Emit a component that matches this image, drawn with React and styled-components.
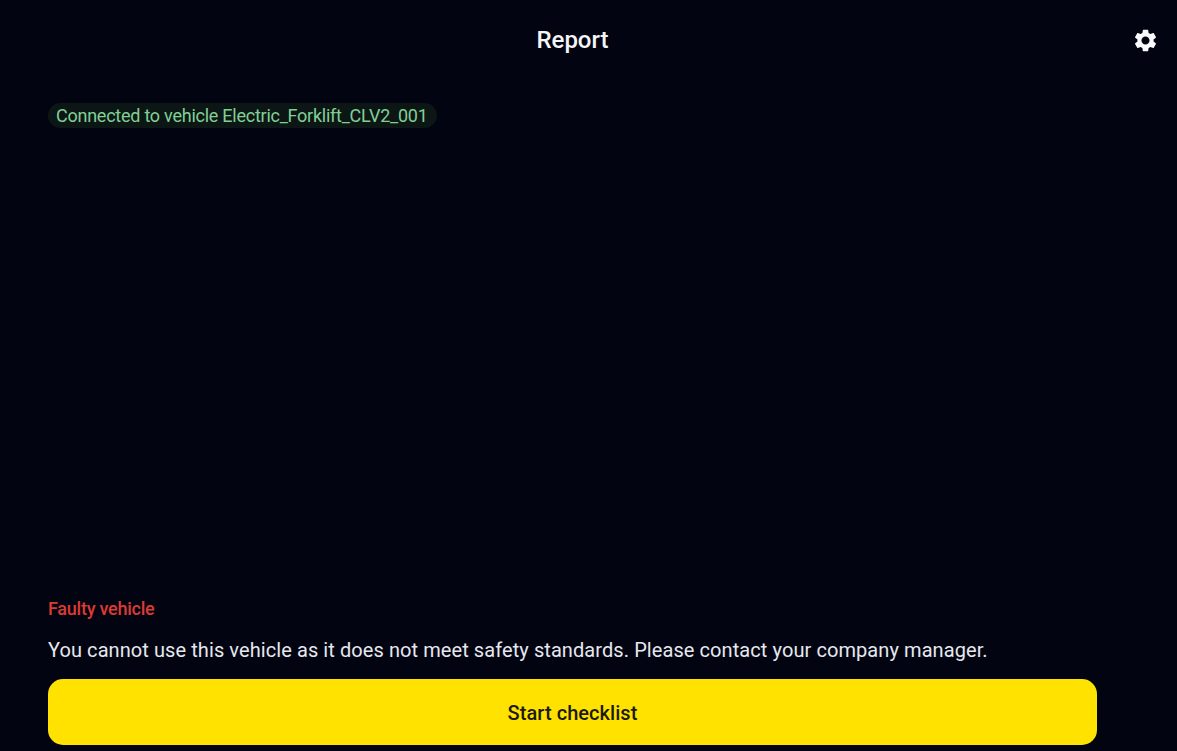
import styled, { createGlobalStyle } from 'styled-components';

const GlobalStyle = createGlobalStyle`
  html, body {
    margin: 0;
    height: 100%;
    background: #020412;
  }
  body {
    font-family: Roboto, 'Noto Sans', sans-serif;
  }
`;

const Screen = styled.div`
  height: 751px;
  box-sizing: border-box;
  display: grid;
  grid-template-columns: 48px 1049px 80px;
  grid-template-rows: 80px 1fr;
  background: #020412;
  overflow: hidden;
`;

const Title = styled.h1`
  grid-column: 2;
  margin: 0;
  align-self: center;
  text-align: center;
  font-size: 24px;
  line-height: 26px;
  font-weight: 500;
  color: #f4f5f8;
`;

const SettingsButton = styled.button`
  grid-column: 3;
  justify-self: end;
  align-self: center;
  width: 27px;
  height: 27px;
  margin-right: 18px;
  padding: 0;
  border: none;
  background: none;
  color: #fbfbfd;
  cursor: pointer;
  display: flex;
`;

const Content = styled.main`
  grid-column: 2;
  display: flex;
  flex-direction: column;
  align-items: flex-start;
  padding: 23px 0 6px;
`;

const StatusPill = styled.div`
  padding: 0 9px 0 8px;
  height: 25px;
  display: flex;
  align-items: center;
  border-radius: 13px;
  background: #0c1715;
  color: #82cf96;
  font-size: 18px;
  letter-spacing: -0.25px;
  white-space: nowrap;
`;

const Footer = styled.div`
  margin-top: auto;
  width: 100%;
  display: flex;
  flex-direction: column;
`;

const FaultLabel = styled.div`
  color: #dc3a33;
  font-size: 18px;
  line-height: 20px;
  font-weight: 500;
  letter-spacing: -0.25px;
`;

const FaultMessage = styled.p`
  margin: 19px 0 17px;
  color: #e6e8ee;
  font-size: 20px;
  line-height: 24px;
  letter-spacing: 0.08px;
  white-space: nowrap;
`;

const PrimaryButton = styled.button`
  width: 100%;
  height: 66px;
  padding: 2px 0 0;
  border: none;
  border-radius: 15px;
  background: #ffe200;
  color: #1c1a0a;
  font-family: inherit;
  font-size: 20px;
  font-weight: 500;
  letter-spacing: 0.05px;
  cursor: pointer;
`;

function GearIcon() {
  return (
    <svg viewBox="0 0 24 24" width="27" height="27" fill="currentColor" aria-hidden="true">
      <path d="M19.14 12.94c.04-.3.06-.61.06-.94 0-.32-.02-.64-.07-.94l2.03-1.58c.18-.14.23-.41.12-.61l-1.92-3.32c-.12-.22-.37-.29-.59-.22l-2.39.96c-.5-.38-1.03-.7-1.62-.94l-.36-2.54c-.04-.24-.24-.41-.48-.41h-3.84c-.24 0-.43.17-.47.41l-.36 2.54c-.59.24-1.13.57-1.62.94l-2.39-.96c-.22-.08-.47 0-.59.22L2.74 8.87c-.12.21-.08.47.12.61l2.03 1.58c-.05.3-.09.63-.09.94s.02.64.07.94l-2.03 1.58c-.18.14-.23.41-.12.61l1.92 3.32c.12.22.37.29.59.22l2.39-.96c.5.38 1.03.7 1.62.94l.36 2.54c.05.24.24.41.48.41h3.84c.24 0 .44-.17.47-.41l.36-2.54c.59-.24 1.13-.56 1.62-.94l2.39.96c.22.08.47 0 .59-.22l1.92-3.32c.12-.22.07-.47-.12-.61l-2.01-1.58zM12 15.6c-1.98 0-3.6-1.62-3.6-3.6s1.62-3.6 3.6-3.6 3.6 1.62 3.6 3.6-1.62 3.6-3.6 3.6z" />
    </svg>
  );
}

export default function App() {
  return (
    <Screen>
      <GlobalStyle />
      <Title>Report</Title>
      <SettingsButton aria-label="Settings">
        <GearIcon />
      </SettingsButton>
      <Content>
        <StatusPill>Connected to vehicle Electric_Forklift_CLV2_001</StatusPill>
        <Footer>
          <FaultLabel>Faulty vehicle</FaultLabel>
          <FaultMessage>
            You cannot use this vehicle as it does not meet safety standards. Please contact your company manager.
          </FaultMessage>
          <PrimaryButton>Start checklist</PrimaryButton>
        </Footer>
      </Content>
    </Screen>
  );
}
